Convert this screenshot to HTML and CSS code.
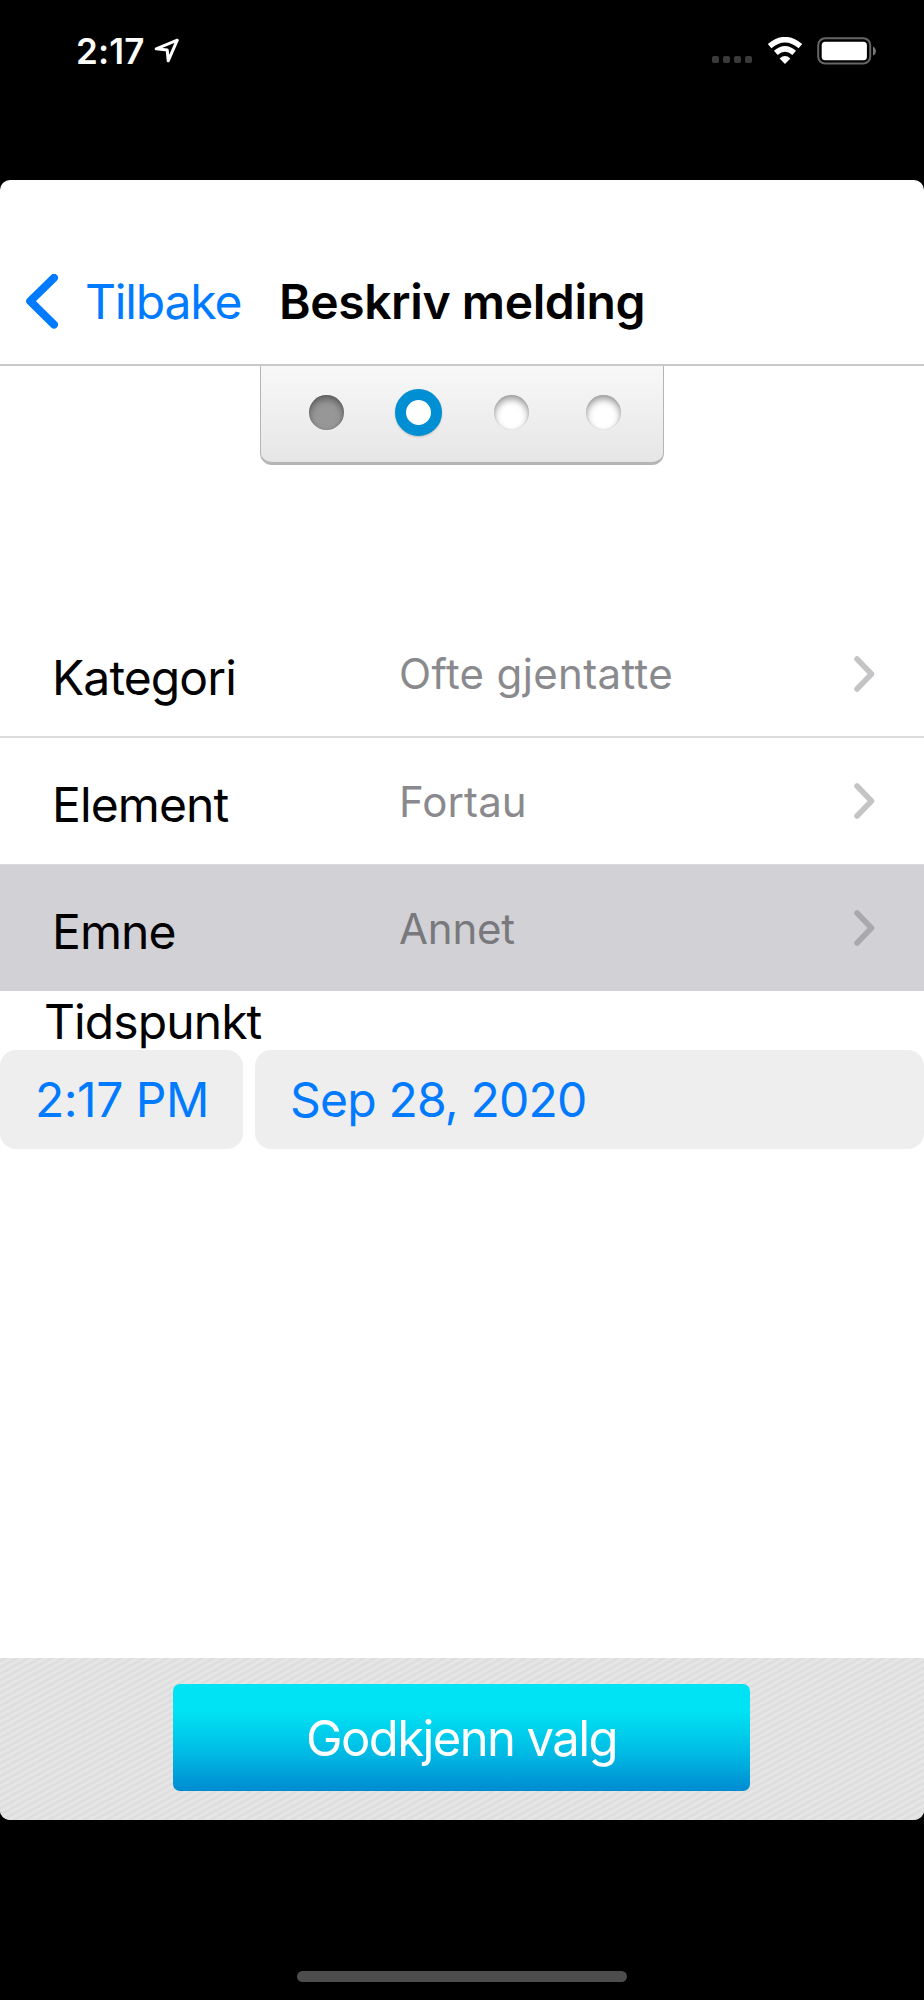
FILE: index.html
```html
<!DOCTYPE html>
<html lang="nb">
<head>
<meta charset="utf-8">
<title>Beskriv melding</title>
<link rel="stylesheet" href="styles.css">
</head>
<body>
<div class="screen">
  <header class="status">
    <span class="clock">2:17</span>
    <svg class="location" width="26" height="26" viewBox="0 0 26 26"><path d="M2.2 10.8 23.3 2.2 14.2 22.8 13.2 12Z"/></svg>
    <div class="signal"><i></i><i></i><i></i><i></i></div>
    <svg class="wifi" width="36" height="28" viewBox="0 0 36 28"><path d="M2.6 9.2Q18-3.8 33.4 9.2M8.8 15.8Q18 7.8 27.2 15.8" fill="none" stroke="#fff" stroke-width="5.6"/><path d="M18 27 12.6 21.5Q18 16.6 23.4 21.5Z" fill="#fff"/></svg>
    <svg class="battery" width="60" height="28" viewBox="0 0 60 28"><rect x="1.2" y="1.2" width="52" height="25.4" rx="7" fill="none" stroke="#666" stroke-width="2"/><rect x="4.7" y="4.7" width="45.2" height="18.6" rx="3.5" fill="#fff"/><path d="M56 9.3Q59 11 59 14T56 18.7Z" fill="#777"/></svg>
  </header>
  <main class="sheet">
    <nav class="nav">
      <svg class="back" width="36" height="56" viewBox="0 0 36 56"><path d="M32 3.8 8.2 27.2 32 50.6"/></svg>
      <a class="back-label">Tilbake</a>
      <h1 class="title">Beskriv melding</h1>
    </nav>
    <div class="steps"><span class="dot done"></span><span class="dot current"></span><span class="dot"></span><span class="dot"></span></div>
    <section class="rows">
      <div class="row"><span class="label">Kategori</span><span class="value ofte">Ofte gjentatte</span><svg class="chevron" width="22" height="36" viewBox="0 0 22 36"><path d="M3 3 17.5 18 3 33"/></svg></div>
      <div class="row"><span class="label">Element</span><span class="value">Fortau</span><svg class="chevron" width="22" height="36" viewBox="0 0 22 36"><path d="M3 3 17.5 18 3 33"/></svg></div>
      <div class="row selected"><span class="label">Emne</span><span class="value annet">Annet</span><svg class="chevron" width="22" height="36" viewBox="0 0 22 36"><path d="M3 3 17.5 18 3 33"/></svg></div>
    </section>
    <div class="when">Tidspunkt</div>
    <div class="pickers"><div class="picker time">2:17 PM</div><div class="picker date">Sep 28, 2020</div></div>
    <footer class="footer"><button class="confirm">Godkjenn valg</button></footer>
  </main>
  <div class="home"></div>
</div>
</body>
</html>
```
FILE: styles.css
```css
* { box-sizing: border-box; }
body { margin: 0; background: #000; font-family: Inter, "Liberation Sans", sans-serif; font-variant-ligatures: none; }
.screen { width: 924px; height: 2000px; background: #000; display: flex; flex-direction: column; }
.status { height: 101px; margin-bottom: 79px; padding: 0 47px 0 76px; display: flex; align-items: center; color: #fff; }
.clock { font-size: 35px; font-weight: 600; letter-spacing: 0.2px; width: 78px; }
.location { fill: none; stroke: #fff; stroke-width: 3; stroke-linejoin: round; }
.signal { display: flex; gap: 4px; margin-left: auto; margin-right: 15px; padding-top: 17px; }
.signal i { width: 7px; height: 7px; border-radius: 2px; background: #3a3a3a; }
.wifi { margin-right: 14px; }
.sheet { height: 1640px; border-radius: 10px; background: #fff; overflow: hidden; display: flex; flex-direction: column; }
.nav { height: 186px; padding: 59px 0 0 22px; display: flex; align-items: center; border-bottom: 2px solid #c9c9cb; }
.back { fill: none; stroke: #007aff; stroke-width: 8; stroke-linecap: round; stroke-linejoin: round; }
.back-label { width: 194px; margin-left: 27px; font-size: 48px; letter-spacing: -1.15px; color: #007aff; }
.title { margin: 0; font-size: 48px; font-weight: 600; letter-spacing: -0.4px; white-space: nowrap; }
.steps { width: 404px; height: 99px; margin: 0 auto; padding: 0 13px 4px 19px; display: grid; grid-template-columns: repeat(4, 92.5px); place-items: center; border: solid #b5b5b5; border-width: 0 1.5px 3px; border-radius: 0 0 12px 12px; background: linear-gradient(#f8f8f8, #e6e6e6); }
.dot { width: 35px; height: 35px; border-radius: 50%; background: #fff; box-shadow: inset 0 4px 7px #0006, inset 0 0 2px #0002; }
.dot.done { background: #979797; }
.dot.current { width: 47px; height: 47px; border: 11.5px solid #008fd3; box-shadow: 0 1px 2px #0003; }
.rows { margin-top: 146px; }
.row { height: 127px; display: grid; grid-template-columns: 347px 1fr 22px; align-items: center; padding: 0 48px 0 52px; border-bottom: 2px solid #dcdcde; white-space: nowrap; }
.row:nth-child(2) { border-bottom-width: 1px; }
.label { padding-top: 7px; font-size: 48px; letter-spacing: -0.9px; }
.value { font-size: 42px; letter-spacing: 0.1px; color: #8a8a8e; }
.ofte { letter-spacing: 0.35px; }
.annet { letter-spacing: -0.2px; }
.chevron { fill: none; stroke: #c4c4c6; stroke-width: 5.5; stroke-linecap: round; stroke-linejoin: round; }
.selected { height: 126px; border-bottom: 0; background: #d1d1d6; }
.selected .value { color: #79797d; }
.selected .chevron { stroke: #a9a9ad; }
.when { height: 59px; padding: 1px 0 0 44px; font-size: 48px; line-height: 59px; letter-spacing: -0.9px; }
.pickers { display: flex; gap: 12px; height: 99px; }
.picker { line-height: 99px; font-size: 48px; letter-spacing: -0.8px; background: #eee; color: #007aff; border-radius: 16px; white-space: nowrap; }
.time { width: 243px; padding-left: 35px; letter-spacing: -0.5px; }
.date { flex: 1; padding-left: 35px; }
.footer { height: 162px; margin-top: auto; padding: 26px 1px 0 0; display: flex; justify-content: center; align-items: flex-start; background: repeating-linear-gradient(151deg, #e8e8e8 0, #dcdcdc 2.8px, #e8e8e8 5.6px); }
.confirm { width: 577px; height: 107px; padding: 2px 0 0; border: 0; border-radius: 7px; background: linear-gradient(#00e3f4 25%, #00bae4 65%, #008bd1); color: #fff; font-family: inherit; font-size: 49px; letter-spacing: -1.6px; }
.home { width: 330px; height: 11px; margin: 151px auto 0; border-radius: 6px; background: #4d4d4d; }
```
